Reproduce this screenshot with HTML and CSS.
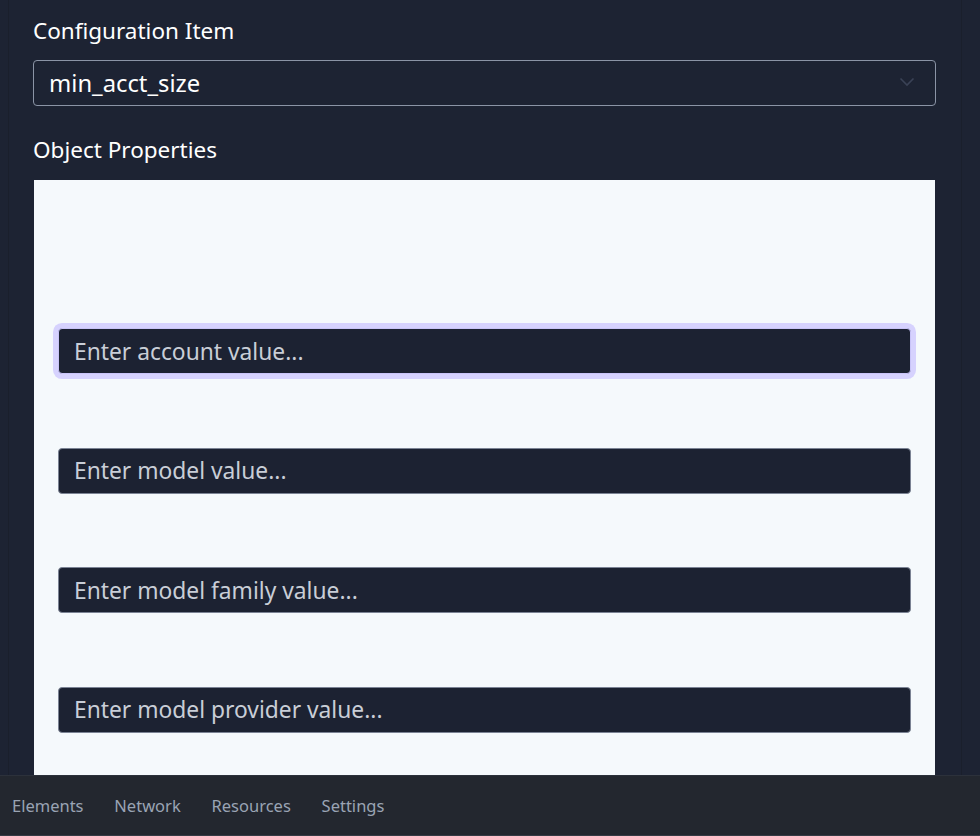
FILE: index.html
```html
<!DOCTYPE html>
<html>
<head>
<meta charset="utf-8">
<link rel="stylesheet" href="styles.css">
</head>
<body>
<div class="app">
  <main class="main">
    <div class="content">
      <label class="field-label">Configuration Item</label>
      <div class="select">
        <span class="select-value">min_acct_size</span>
        <svg class="chevron" width="16" height="10" viewBox="0 0 16 10"><path d="M1.5 1.5 L8 8 L14.5 1.5" fill="none" stroke="#3a4256" stroke-width="1.6"/></svg>
      </div>
      <label class="field-label section">Object Properties</label>
      <div class="panel">
        <div class="inputs">
          <input class="text-input focused" type="text" placeholder="Enter account value...">
          <input class="text-input" type="text" placeholder="Enter model value...">
          <input class="text-input" type="text" placeholder="Enter model family value...">
          <input class="text-input" type="text" placeholder="Enter model provider value...">
        </div>
      </div>
    </div>
  </main>
  <nav class="devbar">
    <span class="tab">Elements</span>
    <span class="tab">Network</span>
    <span class="tab">Resources</span>
    <span class="tab">Settings</span>
  </nav>
</div>
</body>
</html>
```

FILE: styles.css
```css
* { box-sizing: border-box; }
html, body { margin: 0; padding: 0; height: 100%; overflow: hidden; }
body {
  background: #1d2333;
  font-family: "Noto Sans", "Open Sans", sans-serif;
  color: #ffffff;
}
.app {
  display: flex;
  flex-direction: column;
  height: 836px;
}
.main {
  flex: 1;
  overflow: hidden;
  margin-left: 8px;
  width: 954px;
  border-left: 1px solid #1a1f2c;
  border-right: 1px solid #1a1f2c;
}
.content {
  padding: 16px 25px 0 24px;
  display: flex;
  flex-direction: column;
}
.field-label {
  font-size: 22.5px;
  line-height: 30px;
  color: #ffffff;
  display: block;
}
.select {
  margin-top: 14px;
  height: 46px;
  border: 1px solid #8b94a6;
  border-radius: 4px;
  display: flex;
  align-items: center;
  justify-content: space-between;
  padding: 0 20px 0 15px;
}
.select-value { font-size: 23.8px; color: #ffffff; }
.chevron { display: block; margin-top: -2px; }
.section { margin-top: 29px; }
.panel {
  margin-top: 15px;
  margin-left: 1px;
  width: 901px;
  height: 700px;
  background: #f5f9fc;
  padding: 148px 24px 0 24px;
}
.inputs {
  display: flex;
  flex-direction: column;
  gap: 73.5px;
}
.text-input {
  height: 46px;
  width: 100%;
  background: #1c2232;
  border: 1px solid #7b8394;
  border-radius: 4px;
  padding: 0 15px;
  font-family: "Noto Sans", "Open Sans", sans-serif;
  font-size: 22.8px;
  color: #ffffff;
  outline: none;
}
.text-input::placeholder { color: #c9ced7; opacity: 1; }
.text-input.focused {
  border-color: #c9c4f8;
  box-shadow: 0 0 0 5px #d6d2fe;
}
.devbar {
  height: 61px;
  flex: none;
  background: #23272f;
  border-top: 1px solid #2c313b;
  border-bottom: 1px solid #363b45;
  display: flex;
  align-items: center;
  padding-left: 12px;
  gap: 30.8px;
}
.tab {
  font-size: 16.5px;
  color: #9aa4b4;
  font-family: "Noto Sans", "Open Sans", sans-serif;
}
```
